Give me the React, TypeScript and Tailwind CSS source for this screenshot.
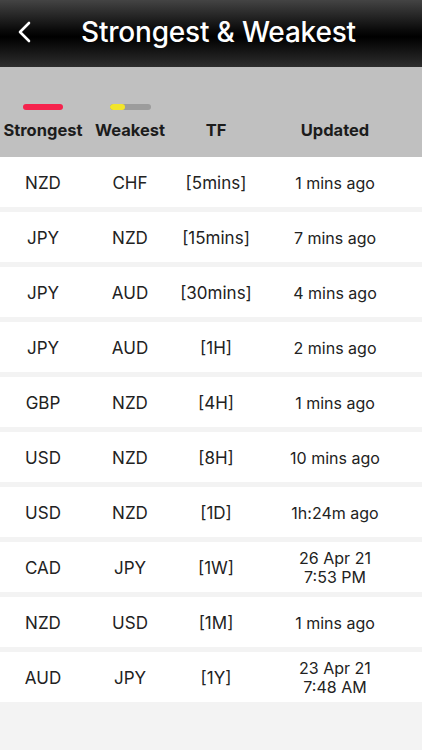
import React from "react";

type Row = { strong: string; weak: string; tf: string; updated: string[] };

const rows: Row[] = [
  { strong: "NZD", weak: "CHF", tf: "[5mins]", updated: ["1 mins ago"] },
  { strong: "JPY", weak: "NZD", tf: "[15mins]", updated: ["7 mins ago"] },
  { strong: "JPY", weak: "AUD", tf: "[30mins]", updated: ["4 mins ago"] },
  { strong: "JPY", weak: "AUD", tf: "[1H]", updated: ["2 mins ago"] },
  { strong: "GBP", weak: "NZD", tf: "[4H]", updated: ["1 mins ago"] },
  { strong: "USD", weak: "NZD", tf: "[8H]", updated: ["10 mins ago"] },
  { strong: "USD", weak: "NZD", tf: "[1D]", updated: ["1h:24m ago"] },
  { strong: "CAD", weak: "JPY", tf: "[1W]", updated: ["26 Apr 21", "7:53 PM"] },
  { strong: "NZD", weak: "USD", tf: "[1M]", updated: ["1 mins ago"] },
  { strong: "AUD", weak: "JPY", tf: "[1Y]", updated: ["23 Apr 21", "7:48 AM"] },
];

export default function App() {
  return (
    <div className="flex min-h-[750px] w-[422px] flex-col bg-[#f3f3f3] font-['Inter',_'Liberation_Sans',_sans-serif] text-[#1c1c1c]">
      <header className="flex h-[67px] items-center bg-[linear-gradient(to_bottom,#444_0%,#0a0a0a_45%,#000_55%,#2e2e2e_100%)] pb-[4px] text-white">
        <button type="button" className="ml-[16px] flex h-[24px] w-[24px] items-center" aria-label="Back">
          <svg width="16" height="24" viewBox="0 0 16 24" fill="none">
            <path d="M13 3 L4 12 L13 21" stroke="white" strokeWidth="2.6" strokeLinecap="round" strokeLinejoin="round" />
          </svg>
        </button>
        <h1 className="ml-[41px] text-[28px] font-medium leading-none tracking-[-0.2px]">Strongest &amp; Weakest</h1>
      </header>

      <div className="flex h-[90px] bg-[#c0c0c0] pt-[37px] text-[16.5px] font-bold">
        <div className="flex w-[86px] flex-col items-center">
          <div className="h-[6px] w-[40px] rounded-full bg-[#f5234d]" />
          <span className="mt-[8px]">Strongest</span>
        </div>
        <div className="flex w-[88px] flex-col items-center">
          <div className="flex h-[6px] w-[41px] overflow-hidden rounded-full bg-[#9c9c9c]">
            <div className="w-[15px] rounded-full bg-[#f2e52a]" />
          </div>
          <span className="mt-[8px]">Weakest</span>
        </div>
        <div className="flex w-[84px] flex-col items-center pt-[14px]">TF</div>
        <div className="flex w-[154px] flex-col items-center pt-[14px]">Updated</div>
      </div>

      <div className="flex flex-col gap-[5px]">
        {rows.map((r, i) => (
          <div key={i} className="flex h-[50px] items-center bg-white pt-[3px] text-[17px] text-[#222]">
            <span className="w-[86px] text-center">{r.strong}</span>
            <span className="w-[88px] text-center">{r.weak}</span>
            <span className="w-[84px] text-center">{r.tf}</span>
            <span className="-mt-[1px] flex w-[154px] flex-col items-center text-[16px] leading-[19px]">
              {r.updated.map((u) => (
                <span key={u}>{u}</span>
              ))}
            </span>
          </div>
        ))}
      </div>
    </div>
  );
}
